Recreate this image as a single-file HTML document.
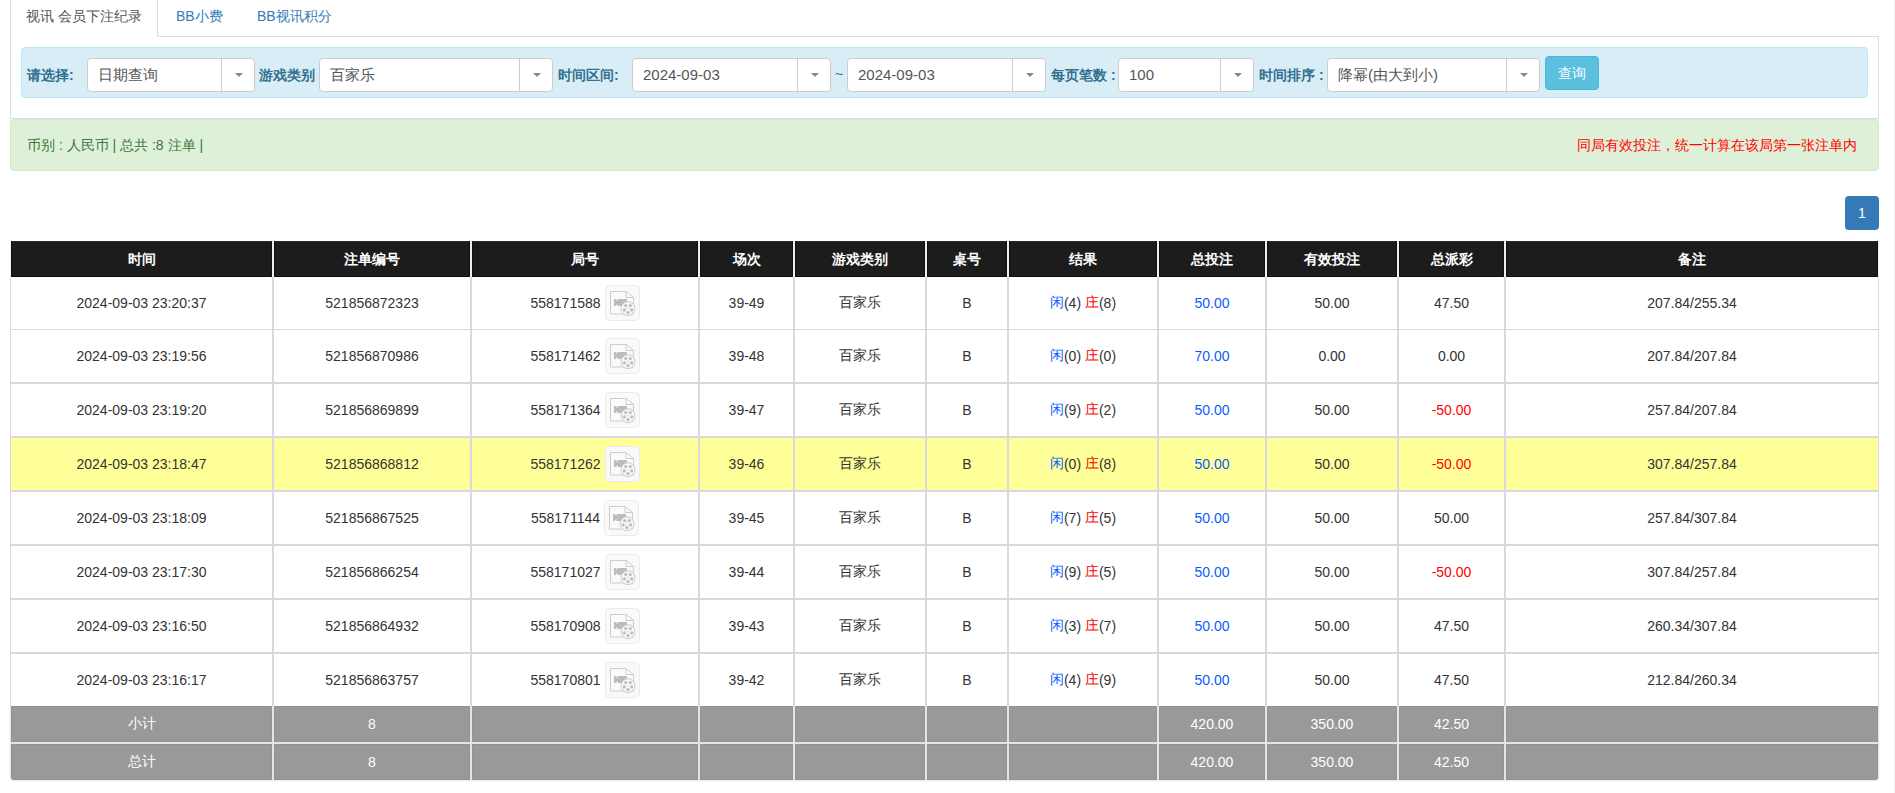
<!DOCTYPE html>
<html><head><meta charset="utf-8"><title>视讯 会员下注纪录</title>
<style>
html,body{margin:0;padding:0;background:#fff;}
body{width:1895px;height:793px;position:relative;overflow:hidden;font-family:"Liberation Sans",sans-serif;font-size:14px;color:#333;}
.a{position:absolute;white-space:nowrap;}
.c{position:absolute;display:flex;align-items:center;justify-content:center;white-space:nowrap;}
.w{display:inline-flex;align-items:center;white-space:pre;}
.ic{display:inline-block;width:35px;height:36px;margin-left:4px;}
.ic svg{display:block}
.sel{position:absolute;top:58px;height:32px;background:#fff;border:1px solid #ccc;border-radius:4px;box-sizing:content-box;}
.sel .t{position:absolute;left:10px;top:0;line-height:32px;font-size:15px;color:#555;white-space:nowrap;}
.sel .d{position:absolute;right:0;top:0;width:32px;height:32px;border-left:1px solid #ccc;}
.sel .d:after{content:"";position:absolute;left:13px;top:14px;border-left:4px solid transparent;border-right:4px solid transparent;border-top:4px solid #888;}
.lb{position:absolute;top:65px;line-height:20px;font-weight:bold;color:#31708f;white-space:nowrap;}
</style></head>
<body>
<!-- tabs -->
<div class="a" style="left:10px;top:0;width:148px;height:37px;border-left:1px solid #ddd;border-right:1px solid #ddd;background:#fff;box-sizing:border-box"></div>
<div class="a" style="left:26px;top:6px;line-height:20px;color:#555">视讯 会员下注纪录</div>
<div class="a" style="left:176px;top:6px;line-height:20px;color:#337ab7">BB小费</div>
<div class="a" style="left:257px;top:6px;line-height:20px;color:#337ab7">BB视讯积分</div>
<!-- tab content -->
<div class="a" style="left:10px;top:36px;width:1869px;height:83px;border:1px solid #ddd;border-top:none;box-sizing:border-box"></div>
<div class="a" style="left:158px;top:36px;width:1721px;height:1px;background:#ddd"></div>
<div class="a" style="left:21px;top:47px;width:1847px;height:51px;background:#d9edf7;border:1px solid #bce8f1;border-radius:4px;box-sizing:border-box"></div>
<div class="lb" style="left:27px">请选择:</div>
<div class="sel" style="left:87px;width:166px"><span class="t">日期查询</span><span class="d"></span></div>
<div class="lb" style="left:259px">游戏类别</div>
<div class="sel" style="left:319px;width:232px"><span class="t">百家乐</span><span class="d"></span></div>
<div class="lb" style="left:558px">时间区间:</div>
<div class="sel" style="left:632px;width:197px"><span class="t">2024-09-03</span><span class="d"></span></div>
<div class="a" style="left:835px;top:64px;line-height:20px;color:#31708f">~</div>
<div class="sel" style="left:847px;width:197px"><span class="t">2024-09-03</span><span class="d"></span></div>
<div class="lb" style="left:1051px">每页笔数 :</div>
<div class="sel" style="left:1118px;width:134px"><span class="t">100</span><span class="d"></span></div>
<div class="lb" style="left:1259px">时间排序 :</div>
<div class="sel" style="left:1327px;width:211px"><span class="t">降幂(由大到小)</span><span class="d"></span></div>
<div class="a" style="left:1545px;top:56px;width:54px;height:34px;background:#5bc0de;border:1px solid #46b8da;border-radius:4px;box-sizing:border-box;color:#fff;text-align:center;line-height:32px">查询</div>
<!-- alert -->
<div class="a" style="left:10px;top:119px;width:1869px;height:52px;background:#dff0d8;border:1px solid #d6e9c6;border-radius:4px;box-sizing:border-box"></div>
<div class="a" style="left:27px;top:135px;line-height:20px;color:#3c763d">币别 : 人民币 | 总共 :8 注单 |</div>
<div class="a" style="right:38px;top:135px;line-height:20px;color:#ff0000">同局有效投注，统一计算在该局第一张注单内</div>
<!-- pagination -->
<div class="a" style="left:1845px;top:196px;width:34px;height:34px;background:#337ab7;border-radius:4px;color:#fff;text-align:center;line-height:34px">1</div>
<!-- table -->
<div style="position:absolute;left:10px;top:241px;width:1869px;height:36px;background:#f0f0f0;border-top-left-radius:3px;border-top-right-radius:3px"></div>
<div class="c" style="left:11px;top:241px;width:261px;height:36px;background:#1c1c1c;color:#fff;font-weight:bold;padding-top:2px;box-sizing:border-box;box-shadow:inset 1px 0 #101010, inset -1px 0 #101010, inset 0 -1px #0a0a0a, inset 0 1px #2b2b2b;"><span class="w">时间</span></div>
<div class="c" style="left:274px;top:241px;width:196px;height:36px;background:#1c1c1c;color:#fff;font-weight:bold;padding-top:2px;box-sizing:border-box;box-shadow:inset 1px 0 #101010, inset -1px 0 #101010, inset 0 -1px #0a0a0a, inset 0 1px #2b2b2b;"><span class="w">注单编号</span></div>
<div class="c" style="left:472px;top:241px;width:226px;height:36px;background:#1c1c1c;color:#fff;font-weight:bold;padding-top:2px;box-sizing:border-box;box-shadow:inset 1px 0 #101010, inset -1px 0 #101010, inset 0 -1px #0a0a0a, inset 0 1px #2b2b2b;"><span class="w">局号</span></div>
<div class="c" style="left:700px;top:241px;width:93px;height:36px;background:#1c1c1c;color:#fff;font-weight:bold;padding-top:2px;box-sizing:border-box;box-shadow:inset 1px 0 #101010, inset -1px 0 #101010, inset 0 -1px #0a0a0a, inset 0 1px #2b2b2b;"><span class="w">场次</span></div>
<div class="c" style="left:795px;top:241px;width:130px;height:36px;background:#1c1c1c;color:#fff;font-weight:bold;padding-top:2px;box-sizing:border-box;box-shadow:inset 1px 0 #101010, inset -1px 0 #101010, inset 0 -1px #0a0a0a, inset 0 1px #2b2b2b;"><span class="w">游戏类别</span></div>
<div class="c" style="left:927px;top:241px;width:80px;height:36px;background:#1c1c1c;color:#fff;font-weight:bold;padding-top:2px;box-sizing:border-box;box-shadow:inset 1px 0 #101010, inset -1px 0 #101010, inset 0 -1px #0a0a0a, inset 0 1px #2b2b2b;"><span class="w">桌号</span></div>
<div class="c" style="left:1009px;top:241px;width:148px;height:36px;background:#1c1c1c;color:#fff;font-weight:bold;padding-top:2px;box-sizing:border-box;box-shadow:inset 1px 0 #101010, inset -1px 0 #101010, inset 0 -1px #0a0a0a, inset 0 1px #2b2b2b;"><span class="w">结果</span></div>
<div class="c" style="left:1159px;top:241px;width:106px;height:36px;background:#1c1c1c;color:#fff;font-weight:bold;padding-top:2px;box-sizing:border-box;box-shadow:inset 1px 0 #101010, inset -1px 0 #101010, inset 0 -1px #0a0a0a, inset 0 1px #2b2b2b;"><span class="w">总投注</span></div>
<div class="c" style="left:1267px;top:241px;width:130px;height:36px;background:#1c1c1c;color:#fff;font-weight:bold;padding-top:2px;box-sizing:border-box;box-shadow:inset 1px 0 #101010, inset -1px 0 #101010, inset 0 -1px #0a0a0a, inset 0 1px #2b2b2b;"><span class="w">有效投注</span></div>
<div class="c" style="left:1399px;top:241px;width:105px;height:36px;background:#1c1c1c;color:#fff;font-weight:bold;padding-top:2px;box-sizing:border-box;box-shadow:inset 1px 0 #101010, inset -1px 0 #101010, inset 0 -1px #0a0a0a, inset 0 1px #2b2b2b;"><span class="w">总派彩</span></div>
<div class="c" style="left:1506px;top:241px;width:372px;height:36px;background:#1c1c1c;color:#fff;font-weight:bold;padding-top:2px;box-sizing:border-box;box-shadow:inset 1px 0 #101010, inset -1px 0 #101010, inset 0 -1px #0a0a0a, inset 0 1px #2b2b2b;"><span class="w">备注</span></div>
<div style="position:absolute;left:10px;top:277px;width:1869px;height:53px;background:#d9d9d9"></div>
<div class="c" style="left:11px;top:277px;width:261px;height:52px;background:#fff;"><span class="w">2024-09-03 23:20:37</span></div>
<div class="c" style="left:274px;top:277px;width:196px;height:52px;background:#fff;"><span class="w">521856872323</span></div>
<div class="c" style="left:472px;top:277px;width:226px;height:52px;background:#fff;"><span class="w"><span>558171588</span><span class="ic"><svg width="35" height="36" viewBox="0 0 35 36"><rect x="0.5" y="0.5" width="34" height="35" rx="4" fill="#f9f9f9" stroke="#ebebeb"/><path d="M5.5 6.5h15.5l7.5 6v16.5h-23z" fill="#fafafa" stroke="#cccccc"/><path d="M21 6.5v6h7.5" fill="none" stroke="#cccccc"/><path d="M9 14h1.5l2 2v-2h9.5v7h-9.5v-2l-2 2h-1.5z" fill="#bcbcbc"/><circle cx="23" cy="23.7" r="7" fill="#f7f7f7" stroke="#cbcbcb"/><circle cx="23.00" cy="27.60" r="1.55" fill="#bcbcbc"/><circle cx="26.71" cy="24.91" r="1.55" fill="#bcbcbc"/><circle cx="25.29" cy="20.54" r="1.55" fill="#bcbcbc"/><circle cx="20.71" cy="20.54" r="1.55" fill="#bcbcbc"/><circle cx="19.29" cy="24.91" r="1.55" fill="#bcbcbc"/><circle cx="23" cy="23.7" r="0.6" fill="#c8c8c8"/></svg></span></span></div>
<div class="c" style="left:700px;top:277px;width:93px;height:52px;background:#fff;"><span class="w">39-49</span></div>
<div class="c" style="left:795px;top:277px;width:130px;height:52px;background:#fff;"><span class="w">百家乐</span></div>
<div class="c" style="left:927px;top:277px;width:80px;height:52px;background:#fff;"><span class="w">B</span></div>
<div class="c" style="left:1009px;top:277px;width:148px;height:52px;background:#fff;"><span class="w"><span style="color:#0a5cff">闲</span>(4) <span style="color:#ff0000">庄</span>(8)</span></div>
<div class="c" style="left:1159px;top:277px;width:106px;height:52px;background:#fff;"><span class="w"><span style="color:#0a5cff">50.00</span></span></div>
<div class="c" style="left:1267px;top:277px;width:130px;height:52px;background:#fff;"><span class="w">50.00</span></div>
<div class="c" style="left:1399px;top:277px;width:105px;height:52px;background:#fff;"><span class="w"><span style="color:#333">47.50</span></span></div>
<div class="c" style="left:1506px;top:277px;width:372px;height:52px;background:#fff;"><span class="w">207.84/255.34</span></div>
<div style="position:absolute;left:10px;top:330px;width:1869px;height:54px;background:#d9d9d9"></div>
<div class="c" style="left:11px;top:330px;width:261px;height:52px;background:#fff;"><span class="w">2024-09-03 23:19:56</span></div>
<div class="c" style="left:274px;top:330px;width:196px;height:52px;background:#fff;"><span class="w">521856870986</span></div>
<div class="c" style="left:472px;top:330px;width:226px;height:52px;background:#fff;"><span class="w"><span>558171462</span><span class="ic"><svg width="35" height="36" viewBox="0 0 35 36"><rect x="0.5" y="0.5" width="34" height="35" rx="4" fill="#f9f9f9" stroke="#ebebeb"/><path d="M5.5 6.5h15.5l7.5 6v16.5h-23z" fill="#fafafa" stroke="#cccccc"/><path d="M21 6.5v6h7.5" fill="none" stroke="#cccccc"/><path d="M9 14h1.5l2 2v-2h9.5v7h-9.5v-2l-2 2h-1.5z" fill="#bcbcbc"/><circle cx="23" cy="23.7" r="7" fill="#f7f7f7" stroke="#cbcbcb"/><circle cx="23.00" cy="27.60" r="1.55" fill="#bcbcbc"/><circle cx="26.71" cy="24.91" r="1.55" fill="#bcbcbc"/><circle cx="25.29" cy="20.54" r="1.55" fill="#bcbcbc"/><circle cx="20.71" cy="20.54" r="1.55" fill="#bcbcbc"/><circle cx="19.29" cy="24.91" r="1.55" fill="#bcbcbc"/><circle cx="23" cy="23.7" r="0.6" fill="#c8c8c8"/></svg></span></span></div>
<div class="c" style="left:700px;top:330px;width:93px;height:52px;background:#fff;"><span class="w">39-48</span></div>
<div class="c" style="left:795px;top:330px;width:130px;height:52px;background:#fff;"><span class="w">百家乐</span></div>
<div class="c" style="left:927px;top:330px;width:80px;height:52px;background:#fff;"><span class="w">B</span></div>
<div class="c" style="left:1009px;top:330px;width:148px;height:52px;background:#fff;"><span class="w"><span style="color:#0a5cff">闲</span>(0) <span style="color:#ff0000">庄</span>(0)</span></div>
<div class="c" style="left:1159px;top:330px;width:106px;height:52px;background:#fff;"><span class="w"><span style="color:#0a5cff">70.00</span></span></div>
<div class="c" style="left:1267px;top:330px;width:130px;height:52px;background:#fff;"><span class="w">0.00</span></div>
<div class="c" style="left:1399px;top:330px;width:105px;height:52px;background:#fff;"><span class="w"><span style="color:#333">0.00</span></span></div>
<div class="c" style="left:1506px;top:330px;width:372px;height:52px;background:#fff;"><span class="w">207.84/207.84</span></div>
<div style="position:absolute;left:10px;top:384px;width:1869px;height:54px;background:#d9d9d9"></div>
<div class="c" style="left:11px;top:384px;width:261px;height:52px;background:#fff;"><span class="w">2024-09-03 23:19:20</span></div>
<div class="c" style="left:274px;top:384px;width:196px;height:52px;background:#fff;"><span class="w">521856869899</span></div>
<div class="c" style="left:472px;top:384px;width:226px;height:52px;background:#fff;"><span class="w"><span>558171364</span><span class="ic"><svg width="35" height="36" viewBox="0 0 35 36"><rect x="0.5" y="0.5" width="34" height="35" rx="4" fill="#f9f9f9" stroke="#ebebeb"/><path d="M5.5 6.5h15.5l7.5 6v16.5h-23z" fill="#fafafa" stroke="#cccccc"/><path d="M21 6.5v6h7.5" fill="none" stroke="#cccccc"/><path d="M9 14h1.5l2 2v-2h9.5v7h-9.5v-2l-2 2h-1.5z" fill="#bcbcbc"/><circle cx="23" cy="23.7" r="7" fill="#f7f7f7" stroke="#cbcbcb"/><circle cx="23.00" cy="27.60" r="1.55" fill="#bcbcbc"/><circle cx="26.71" cy="24.91" r="1.55" fill="#bcbcbc"/><circle cx="25.29" cy="20.54" r="1.55" fill="#bcbcbc"/><circle cx="20.71" cy="20.54" r="1.55" fill="#bcbcbc"/><circle cx="19.29" cy="24.91" r="1.55" fill="#bcbcbc"/><circle cx="23" cy="23.7" r="0.6" fill="#c8c8c8"/></svg></span></span></div>
<div class="c" style="left:700px;top:384px;width:93px;height:52px;background:#fff;"><span class="w">39-47</span></div>
<div class="c" style="left:795px;top:384px;width:130px;height:52px;background:#fff;"><span class="w">百家乐</span></div>
<div class="c" style="left:927px;top:384px;width:80px;height:52px;background:#fff;"><span class="w">B</span></div>
<div class="c" style="left:1009px;top:384px;width:148px;height:52px;background:#fff;"><span class="w"><span style="color:#0a5cff">闲</span>(9) <span style="color:#ff0000">庄</span>(2)</span></div>
<div class="c" style="left:1159px;top:384px;width:106px;height:52px;background:#fff;"><span class="w"><span style="color:#0a5cff">50.00</span></span></div>
<div class="c" style="left:1267px;top:384px;width:130px;height:52px;background:#fff;"><span class="w">50.00</span></div>
<div class="c" style="left:1399px;top:384px;width:105px;height:52px;background:#fff;"><span class="w"><span style="color:#ff0000">-50.00</span></span></div>
<div class="c" style="left:1506px;top:384px;width:372px;height:52px;background:#fff;"><span class="w">257.84/207.84</span></div>
<div style="position:absolute;left:10px;top:438px;width:1869px;height:54px;background:#d8d8e0"></div>
<div class="c" style="left:11px;top:438px;width:261px;height:52px;background:#ffff99;"><span class="w">2024-09-03 23:18:47</span></div>
<div class="c" style="left:274px;top:438px;width:196px;height:52px;background:#ffff99;"><span class="w">521856868812</span></div>
<div class="c" style="left:472px;top:438px;width:226px;height:52px;background:#ffff99;"><span class="w"><span>558171262</span><span class="ic"><svg width="35" height="36" viewBox="0 0 35 36"><rect x="0.5" y="0.5" width="34" height="35" rx="4" fill="#f9f9f9" stroke="#ebebeb"/><path d="M5.5 6.5h15.5l7.5 6v16.5h-23z" fill="#fafafa" stroke="#cccccc"/><path d="M21 6.5v6h7.5" fill="none" stroke="#cccccc"/><path d="M9 14h1.5l2 2v-2h9.5v7h-9.5v-2l-2 2h-1.5z" fill="#bcbcbc"/><circle cx="23" cy="23.7" r="7" fill="#f7f7f7" stroke="#cbcbcb"/><circle cx="23.00" cy="27.60" r="1.55" fill="#bcbcbc"/><circle cx="26.71" cy="24.91" r="1.55" fill="#bcbcbc"/><circle cx="25.29" cy="20.54" r="1.55" fill="#bcbcbc"/><circle cx="20.71" cy="20.54" r="1.55" fill="#bcbcbc"/><circle cx="19.29" cy="24.91" r="1.55" fill="#bcbcbc"/><circle cx="23" cy="23.7" r="0.6" fill="#c8c8c8"/></svg></span></span></div>
<div class="c" style="left:700px;top:438px;width:93px;height:52px;background:#ffff99;"><span class="w">39-46</span></div>
<div class="c" style="left:795px;top:438px;width:130px;height:52px;background:#ffff99;"><span class="w">百家乐</span></div>
<div class="c" style="left:927px;top:438px;width:80px;height:52px;background:#ffff99;"><span class="w">B</span></div>
<div class="c" style="left:1009px;top:438px;width:148px;height:52px;background:#ffff99;"><span class="w"><span style="color:#0a5cff">闲</span>(0) <span style="color:#ff0000">庄</span>(8)</span></div>
<div class="c" style="left:1159px;top:438px;width:106px;height:52px;background:#ffff99;"><span class="w"><span style="color:#0a5cff">50.00</span></span></div>
<div class="c" style="left:1267px;top:438px;width:130px;height:52px;background:#ffff99;"><span class="w">50.00</span></div>
<div class="c" style="left:1399px;top:438px;width:105px;height:52px;background:#ffff99;"><span class="w"><span style="color:#ff0000">-50.00</span></span></div>
<div class="c" style="left:1506px;top:438px;width:372px;height:52px;background:#ffff99;"><span class="w">307.84/257.84</span></div>
<div style="position:absolute;left:10px;top:492px;width:1869px;height:54px;background:#d9d9d9"></div>
<div class="c" style="left:11px;top:492px;width:261px;height:52px;background:#fff;"><span class="w">2024-09-03 23:18:09</span></div>
<div class="c" style="left:274px;top:492px;width:196px;height:52px;background:#fff;"><span class="w">521856867525</span></div>
<div class="c" style="left:472px;top:492px;width:226px;height:52px;background:#fff;"><span class="w"><span>558171144</span><span class="ic"><svg width="35" height="36" viewBox="0 0 35 36"><rect x="0.5" y="0.5" width="34" height="35" rx="4" fill="#f9f9f9" stroke="#ebebeb"/><path d="M5.5 6.5h15.5l7.5 6v16.5h-23z" fill="#fafafa" stroke="#cccccc"/><path d="M21 6.5v6h7.5" fill="none" stroke="#cccccc"/><path d="M9 14h1.5l2 2v-2h9.5v7h-9.5v-2l-2 2h-1.5z" fill="#bcbcbc"/><circle cx="23" cy="23.7" r="7" fill="#f7f7f7" stroke="#cbcbcb"/><circle cx="23.00" cy="27.60" r="1.55" fill="#bcbcbc"/><circle cx="26.71" cy="24.91" r="1.55" fill="#bcbcbc"/><circle cx="25.29" cy="20.54" r="1.55" fill="#bcbcbc"/><circle cx="20.71" cy="20.54" r="1.55" fill="#bcbcbc"/><circle cx="19.29" cy="24.91" r="1.55" fill="#bcbcbc"/><circle cx="23" cy="23.7" r="0.6" fill="#c8c8c8"/></svg></span></span></div>
<div class="c" style="left:700px;top:492px;width:93px;height:52px;background:#fff;"><span class="w">39-45</span></div>
<div class="c" style="left:795px;top:492px;width:130px;height:52px;background:#fff;"><span class="w">百家乐</span></div>
<div class="c" style="left:927px;top:492px;width:80px;height:52px;background:#fff;"><span class="w">B</span></div>
<div class="c" style="left:1009px;top:492px;width:148px;height:52px;background:#fff;"><span class="w"><span style="color:#0a5cff">闲</span>(7) <span style="color:#ff0000">庄</span>(5)</span></div>
<div class="c" style="left:1159px;top:492px;width:106px;height:52px;background:#fff;"><span class="w"><span style="color:#0a5cff">50.00</span></span></div>
<div class="c" style="left:1267px;top:492px;width:130px;height:52px;background:#fff;"><span class="w">50.00</span></div>
<div class="c" style="left:1399px;top:492px;width:105px;height:52px;background:#fff;"><span class="w"><span style="color:#333">50.00</span></span></div>
<div class="c" style="left:1506px;top:492px;width:372px;height:52px;background:#fff;"><span class="w">257.84/307.84</span></div>
<div style="position:absolute;left:10px;top:546px;width:1869px;height:54px;background:#d9d9d9"></div>
<div class="c" style="left:11px;top:546px;width:261px;height:52px;background:#fff;"><span class="w">2024-09-03 23:17:30</span></div>
<div class="c" style="left:274px;top:546px;width:196px;height:52px;background:#fff;"><span class="w">521856866254</span></div>
<div class="c" style="left:472px;top:546px;width:226px;height:52px;background:#fff;"><span class="w"><span>558171027</span><span class="ic"><svg width="35" height="36" viewBox="0 0 35 36"><rect x="0.5" y="0.5" width="34" height="35" rx="4" fill="#f9f9f9" stroke="#ebebeb"/><path d="M5.5 6.5h15.5l7.5 6v16.5h-23z" fill="#fafafa" stroke="#cccccc"/><path d="M21 6.5v6h7.5" fill="none" stroke="#cccccc"/><path d="M9 14h1.5l2 2v-2h9.5v7h-9.5v-2l-2 2h-1.5z" fill="#bcbcbc"/><circle cx="23" cy="23.7" r="7" fill="#f7f7f7" stroke="#cbcbcb"/><circle cx="23.00" cy="27.60" r="1.55" fill="#bcbcbc"/><circle cx="26.71" cy="24.91" r="1.55" fill="#bcbcbc"/><circle cx="25.29" cy="20.54" r="1.55" fill="#bcbcbc"/><circle cx="20.71" cy="20.54" r="1.55" fill="#bcbcbc"/><circle cx="19.29" cy="24.91" r="1.55" fill="#bcbcbc"/><circle cx="23" cy="23.7" r="0.6" fill="#c8c8c8"/></svg></span></span></div>
<div class="c" style="left:700px;top:546px;width:93px;height:52px;background:#fff;"><span class="w">39-44</span></div>
<div class="c" style="left:795px;top:546px;width:130px;height:52px;background:#fff;"><span class="w">百家乐</span></div>
<div class="c" style="left:927px;top:546px;width:80px;height:52px;background:#fff;"><span class="w">B</span></div>
<div class="c" style="left:1009px;top:546px;width:148px;height:52px;background:#fff;"><span class="w"><span style="color:#0a5cff">闲</span>(9) <span style="color:#ff0000">庄</span>(5)</span></div>
<div class="c" style="left:1159px;top:546px;width:106px;height:52px;background:#fff;"><span class="w"><span style="color:#0a5cff">50.00</span></span></div>
<div class="c" style="left:1267px;top:546px;width:130px;height:52px;background:#fff;"><span class="w">50.00</span></div>
<div class="c" style="left:1399px;top:546px;width:105px;height:52px;background:#fff;"><span class="w"><span style="color:#ff0000">-50.00</span></span></div>
<div class="c" style="left:1506px;top:546px;width:372px;height:52px;background:#fff;"><span class="w">307.84/257.84</span></div>
<div style="position:absolute;left:10px;top:600px;width:1869px;height:54px;background:#d9d9d9"></div>
<div class="c" style="left:11px;top:600px;width:261px;height:52px;background:#fff;"><span class="w">2024-09-03 23:16:50</span></div>
<div class="c" style="left:274px;top:600px;width:196px;height:52px;background:#fff;"><span class="w">521856864932</span></div>
<div class="c" style="left:472px;top:600px;width:226px;height:52px;background:#fff;"><span class="w"><span>558170908</span><span class="ic"><svg width="35" height="36" viewBox="0 0 35 36"><rect x="0.5" y="0.5" width="34" height="35" rx="4" fill="#f9f9f9" stroke="#ebebeb"/><path d="M5.5 6.5h15.5l7.5 6v16.5h-23z" fill="#fafafa" stroke="#cccccc"/><path d="M21 6.5v6h7.5" fill="none" stroke="#cccccc"/><path d="M9 14h1.5l2 2v-2h9.5v7h-9.5v-2l-2 2h-1.5z" fill="#bcbcbc"/><circle cx="23" cy="23.7" r="7" fill="#f7f7f7" stroke="#cbcbcb"/><circle cx="23.00" cy="27.60" r="1.55" fill="#bcbcbc"/><circle cx="26.71" cy="24.91" r="1.55" fill="#bcbcbc"/><circle cx="25.29" cy="20.54" r="1.55" fill="#bcbcbc"/><circle cx="20.71" cy="20.54" r="1.55" fill="#bcbcbc"/><circle cx="19.29" cy="24.91" r="1.55" fill="#bcbcbc"/><circle cx="23" cy="23.7" r="0.6" fill="#c8c8c8"/></svg></span></span></div>
<div class="c" style="left:700px;top:600px;width:93px;height:52px;background:#fff;"><span class="w">39-43</span></div>
<div class="c" style="left:795px;top:600px;width:130px;height:52px;background:#fff;"><span class="w">百家乐</span></div>
<div class="c" style="left:927px;top:600px;width:80px;height:52px;background:#fff;"><span class="w">B</span></div>
<div class="c" style="left:1009px;top:600px;width:148px;height:52px;background:#fff;"><span class="w"><span style="color:#0a5cff">闲</span>(3) <span style="color:#ff0000">庄</span>(7)</span></div>
<div class="c" style="left:1159px;top:600px;width:106px;height:52px;background:#fff;"><span class="w"><span style="color:#0a5cff">50.00</span></span></div>
<div class="c" style="left:1267px;top:600px;width:130px;height:52px;background:#fff;"><span class="w">50.00</span></div>
<div class="c" style="left:1399px;top:600px;width:105px;height:52px;background:#fff;"><span class="w"><span style="color:#333">47.50</span></span></div>
<div class="c" style="left:1506px;top:600px;width:372px;height:52px;background:#fff;"><span class="w">260.34/307.84</span></div>
<div style="position:absolute;left:10px;top:654px;width:1869px;height:52px;background:#d9d9d9"></div>
<div class="c" style="left:11px;top:654px;width:261px;height:52px;background:#fff;"><span class="w">2024-09-03 23:16:17</span></div>
<div class="c" style="left:274px;top:654px;width:196px;height:52px;background:#fff;"><span class="w">521856863757</span></div>
<div class="c" style="left:472px;top:654px;width:226px;height:52px;background:#fff;"><span class="w"><span>558170801</span><span class="ic"><svg width="35" height="36" viewBox="0 0 35 36"><rect x="0.5" y="0.5" width="34" height="35" rx="4" fill="#f9f9f9" stroke="#ebebeb"/><path d="M5.5 6.5h15.5l7.5 6v16.5h-23z" fill="#fafafa" stroke="#cccccc"/><path d="M21 6.5v6h7.5" fill="none" stroke="#cccccc"/><path d="M9 14h1.5l2 2v-2h9.5v7h-9.5v-2l-2 2h-1.5z" fill="#bcbcbc"/><circle cx="23" cy="23.7" r="7" fill="#f7f7f7" stroke="#cbcbcb"/><circle cx="23.00" cy="27.60" r="1.55" fill="#bcbcbc"/><circle cx="26.71" cy="24.91" r="1.55" fill="#bcbcbc"/><circle cx="25.29" cy="20.54" r="1.55" fill="#bcbcbc"/><circle cx="20.71" cy="20.54" r="1.55" fill="#bcbcbc"/><circle cx="19.29" cy="24.91" r="1.55" fill="#bcbcbc"/><circle cx="23" cy="23.7" r="0.6" fill="#c8c8c8"/></svg></span></span></div>
<div class="c" style="left:700px;top:654px;width:93px;height:52px;background:#fff;"><span class="w">39-42</span></div>
<div class="c" style="left:795px;top:654px;width:130px;height:52px;background:#fff;"><span class="w">百家乐</span></div>
<div class="c" style="left:927px;top:654px;width:80px;height:52px;background:#fff;"><span class="w">B</span></div>
<div class="c" style="left:1009px;top:654px;width:148px;height:52px;background:#fff;"><span class="w"><span style="color:#0a5cff">闲</span>(4) <span style="color:#ff0000">庄</span>(9)</span></div>
<div class="c" style="left:1159px;top:654px;width:106px;height:52px;background:#fff;"><span class="w"><span style="color:#0a5cff">50.00</span></span></div>
<div class="c" style="left:1267px;top:654px;width:130px;height:52px;background:#fff;"><span class="w">50.00</span></div>
<div class="c" style="left:1399px;top:654px;width:105px;height:52px;background:#fff;"><span class="w"><span style="color:#333">47.50</span></span></div>
<div class="c" style="left:1506px;top:654px;width:372px;height:52px;background:#fff;"><span class="w">212.84/260.34</span></div>
<div style="position:absolute;left:10px;top:706px;width:1869px;height:74px;background:#e5e5e5;border-bottom-left-radius:4px;border-bottom-right-radius:4px;box-shadow:0 1px 2px rgba(0,0,0,.10)"></div>
<div class="c" style="left:11px;top:706px;width:261px;height:36px;background:#999;color:#fff;box-shadow:inset 1px 0 #939393, inset -1px 0 #939393, inset 0 1px #909090, inset 0 -1px #939393;"><span class="w">小计</span></div>
<div class="c" style="left:274px;top:706px;width:196px;height:36px;background:#999;color:#fff;box-shadow:inset 1px 0 #939393, inset -1px 0 #939393, inset 0 1px #909090, inset 0 -1px #939393;"><span class="w">8</span></div>
<div class="c" style="left:472px;top:706px;width:226px;height:36px;background:#999;color:#fff;box-shadow:inset 1px 0 #939393, inset -1px 0 #939393, inset 0 1px #909090, inset 0 -1px #939393;"><span class="w"></span></div>
<div class="c" style="left:700px;top:706px;width:93px;height:36px;background:#999;color:#fff;box-shadow:inset 1px 0 #939393, inset -1px 0 #939393, inset 0 1px #909090, inset 0 -1px #939393;"><span class="w"></span></div>
<div class="c" style="left:795px;top:706px;width:130px;height:36px;background:#999;color:#fff;box-shadow:inset 1px 0 #939393, inset -1px 0 #939393, inset 0 1px #909090, inset 0 -1px #939393;"><span class="w"></span></div>
<div class="c" style="left:927px;top:706px;width:80px;height:36px;background:#999;color:#fff;box-shadow:inset 1px 0 #939393, inset -1px 0 #939393, inset 0 1px #909090, inset 0 -1px #939393;"><span class="w"></span></div>
<div class="c" style="left:1009px;top:706px;width:148px;height:36px;background:#999;color:#fff;box-shadow:inset 1px 0 #939393, inset -1px 0 #939393, inset 0 1px #909090, inset 0 -1px #939393;"><span class="w"></span></div>
<div class="c" style="left:1159px;top:706px;width:106px;height:36px;background:#999;color:#fff;box-shadow:inset 1px 0 #939393, inset -1px 0 #939393, inset 0 1px #909090, inset 0 -1px #939393;"><span class="w">420.00</span></div>
<div class="c" style="left:1267px;top:706px;width:130px;height:36px;background:#999;color:#fff;box-shadow:inset 1px 0 #939393, inset -1px 0 #939393, inset 0 1px #909090, inset 0 -1px #939393;"><span class="w">350.00</span></div>
<div class="c" style="left:1399px;top:706px;width:105px;height:36px;background:#999;color:#fff;box-shadow:inset 1px 0 #939393, inset -1px 0 #939393, inset 0 1px #909090, inset 0 -1px #939393;"><span class="w">42.50</span></div>
<div class="c" style="left:1506px;top:706px;width:372px;height:36px;background:#999;color:#fff;box-shadow:inset 1px 0 #939393, inset -1px 0 #939393, inset 0 1px #909090, inset 0 -1px #939393;"><span class="w"></span></div>
<div class="c" style="left:11px;top:744px;width:261px;height:36px;background:#999;color:#fff;box-shadow:inset 1px 0 #939393, inset -1px 0 #939393, inset 0 1px #909090, inset 0 -1px #939393;border-bottom-left-radius:4px;"><span class="w">总计</span></div>
<div class="c" style="left:274px;top:744px;width:196px;height:36px;background:#999;color:#fff;box-shadow:inset 1px 0 #939393, inset -1px 0 #939393, inset 0 1px #909090, inset 0 -1px #939393;"><span class="w">8</span></div>
<div class="c" style="left:472px;top:744px;width:226px;height:36px;background:#999;color:#fff;box-shadow:inset 1px 0 #939393, inset -1px 0 #939393, inset 0 1px #909090, inset 0 -1px #939393;"><span class="w"></span></div>
<div class="c" style="left:700px;top:744px;width:93px;height:36px;background:#999;color:#fff;box-shadow:inset 1px 0 #939393, inset -1px 0 #939393, inset 0 1px #909090, inset 0 -1px #939393;"><span class="w"></span></div>
<div class="c" style="left:795px;top:744px;width:130px;height:36px;background:#999;color:#fff;box-shadow:inset 1px 0 #939393, inset -1px 0 #939393, inset 0 1px #909090, inset 0 -1px #939393;"><span class="w"></span></div>
<div class="c" style="left:927px;top:744px;width:80px;height:36px;background:#999;color:#fff;box-shadow:inset 1px 0 #939393, inset -1px 0 #939393, inset 0 1px #909090, inset 0 -1px #939393;"><span class="w"></span></div>
<div class="c" style="left:1009px;top:744px;width:148px;height:36px;background:#999;color:#fff;box-shadow:inset 1px 0 #939393, inset -1px 0 #939393, inset 0 1px #909090, inset 0 -1px #939393;"><span class="w"></span></div>
<div class="c" style="left:1159px;top:744px;width:106px;height:36px;background:#999;color:#fff;box-shadow:inset 1px 0 #939393, inset -1px 0 #939393, inset 0 1px #909090, inset 0 -1px #939393;"><span class="w">420.00</span></div>
<div class="c" style="left:1267px;top:744px;width:130px;height:36px;background:#999;color:#fff;box-shadow:inset 1px 0 #939393, inset -1px 0 #939393, inset 0 1px #909090, inset 0 -1px #939393;"><span class="w">350.00</span></div>
<div class="c" style="left:1399px;top:744px;width:105px;height:36px;background:#999;color:#fff;box-shadow:inset 1px 0 #939393, inset -1px 0 #939393, inset 0 1px #909090, inset 0 -1px #939393;"><span class="w">42.50</span></div>
<div class="c" style="left:1506px;top:744px;width:372px;height:36px;background:#999;color:#fff;box-shadow:inset 1px 0 #939393, inset -1px 0 #939393, inset 0 1px #909090, inset 0 -1px #939393;border-bottom-right-radius:4px;"><span class="w"></span></div>
<!-- scrollbar edge -->
<div class="a" style="left:1894px;top:0;width:1px;height:793px;background:#efefef"></div>
</body></html>
